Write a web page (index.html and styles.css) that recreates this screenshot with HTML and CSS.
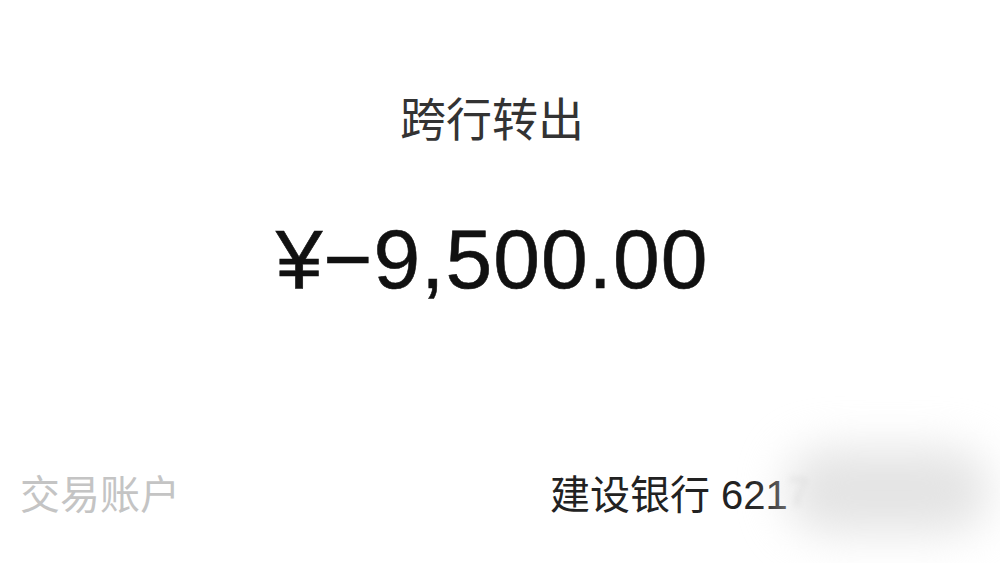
FILE: index.html
```html
<!DOCTYPE html>
<html lang="zh">
<head>
<meta charset="utf-8">
<link rel="stylesheet" href="styles.css">
</head>
<body>
<div class="page">
  <div class="title">跨行转出</div>
  <div class="amount">¥−9,500.00</div>
  <div class="row">
    <div class="label">交易账户</div>
    <div class="value"><span class="bank">建设银行 621</span><span class="fade">7</span><span class="smudge"></span></div>
  </div>
</div>
</body>
</html>
```
FILE: styles.css
```css
html, body {
  margin: 0;
  padding: 0;
  background: #fff;
}
.page {
  width: 1000px;
  height: 563px;
  overflow: hidden;
  box-sizing: border-box;
  padding-right: 16px;
  display: flex;
  flex-direction: column;
  align-items: center;
  font-family: "Liberation Sans", "Noto Sans CJK SC", sans-serif;
}
.title {
  margin-top: 88px;
  font-size: 46px;
  line-height: 56px;
  color: #333;
  font-family: "Noto Sans CJK SC", sans-serif;
}
.amount {
  margin-top: 65px;
  font-size: 84px;
  line-height: 100px;
  color: #111;
  letter-spacing: 1px;
  -webkit-text-stroke: 0.6px #111;
}
.row {
  align-self: stretch;
  margin-right: -16px;
  margin-top: 154px;
  display: flex;
  align-items: center;
  justify-content: space-between;
  padding-left: 20px;
}
.label {
  font-family: "Noto Sans CJK SC", sans-serif;
  font-size: 40px;
  color: #c4c4c4;
}
.value {
  position: relative;
  width: 450px;
  display: flex;
  align-items: center;
  font-size: 40px;
  color: #222;
  font-family: "Liberation Sans", "Noto Sans CJK SC", sans-serif;
}
.fade {
  color: #d8d8d8;
  filter: blur(3px);
}
.smudge {
  position: absolute;
  left: 235px;
  top: -15px;
  width: 205px;
  height: 85px;
  border-radius: 45px;
  background: #e4e4e4;
  filter: blur(22px);
}
```
